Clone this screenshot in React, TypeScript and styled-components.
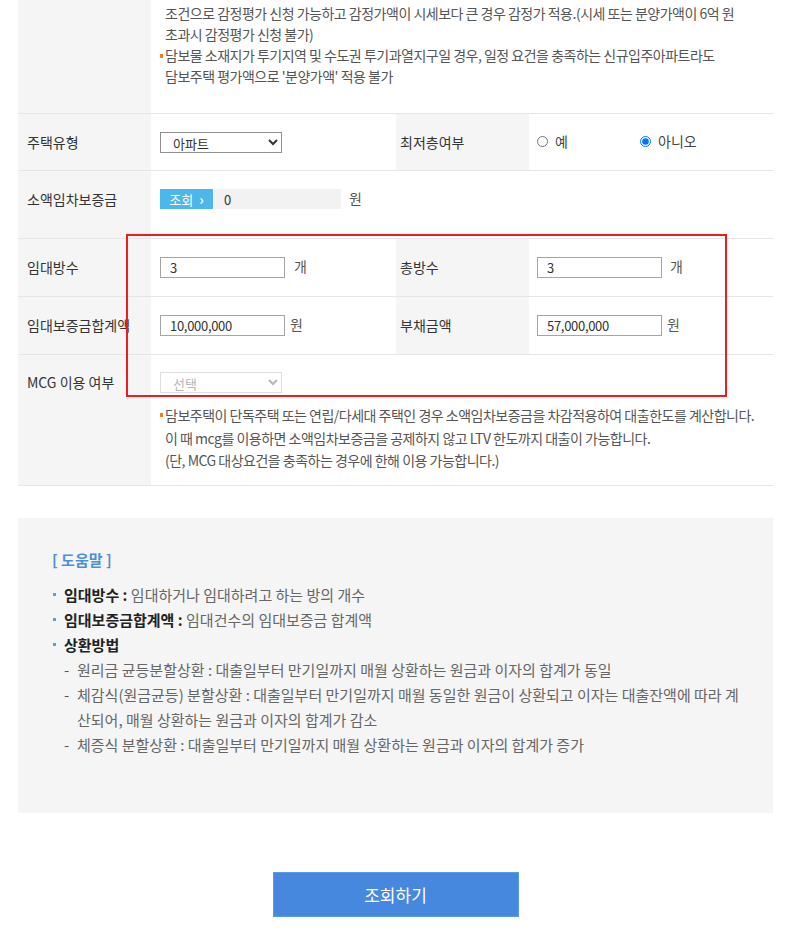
import React from "react";
import styled, {createGlobalStyle} from "styled-components";

const GlobalStyle = createGlobalStyle`
    body {
        margin: 0;
        background: #fff;
        font-family: "Noto Sans CJK KR", "Noto Sans", sans-serif;
        color: #333;
        font-size: 14px;
    }
`;

export default function App() {
    return (
        <Page>
            <GlobalStyle/>
            <FormWrap>
                <Table>
                    <colgroup>
                        <Col $w={133}/>
                        <Col $w={245}/>
                        <Col $w={133}/>
                        <Col $w={244}/>
                    </colgroup>
                    <tbody>
                    <Row>
                        <Th $pb={26}/>
                        <Td colSpan={3} $pt={3} $pb={26}>
                            <Note>
                                <NoteLine $plain>조건으로 감정평가 신청 가능하고 감정가액이 시세보다 큰 경우 감정가 적용.(시세 또는 분양가액이 6억 원<br/>초과시 감정평가 신청 불가)</NoteLine>
                                <NoteLine>담보물 소재지가 투기지역 및 수도권 투기과열지구일 경우, 일정 요건을 충족하는 신규입주아파트라도<br/>담보주택 평가액으로 '분양가액' 적용 불가</NoteLine>
                            </Note>
                        </Td>
                    </Row>
                    <Row>
                        <Th $pb={17}>주택유형</Th>
                        <Td $pb={17}>
                            <Select defaultValue="apt">
                                <option value="apt">아파트</option>
                                <option value="house">단독주택</option>
                            </Select>
                        </Td>
                        <Th $pb={17} $pl={4}>최저층여부</Th>
                        <Td $pb={17} $pl={8}>
                            <RadioGroup>
                                <RadioLabel><input type="radio" name="floor"/>예</RadioLabel>
                                <RadioLabel><input type="radio" name="floor" defaultChecked/>아니오</RadioLabel>
                            </RadioGroup>
                        </Td>
                    </Row>
                    <Row>
                        <Th>소액임차보증금</Th>
                        <Td colSpan={3} $pb={28}>
                            <Field>
                                <LookupButton>조회 <Chevron>›</Chevron></LookupButton>
                                <ReadOnly value="0" readOnly/>
                                <Unit $gap={8}>원</Unit>
                            </Field>
                        </Td>
                    </Row>
                    <Row>
                        <Th>임대방수</Th>
                        <Td>
                            <Field>
                                <Input defaultValue="3"/>
                                <Unit $gap={9}>개</Unit>
                            </Field>
                        </Td>
                        <Th $pl={4}>총방수</Th>
                        <Td $pl={8}>
                            <Field>
                                <Input defaultValue="3"/>
                                <Unit $gap={8}>개</Unit>
                            </Field>
                        </Td>
                    </Row>
                    <Row>
                        <Th>임대보증금합계액</Th>
                        <Td>
                            <Field>
                                <Input defaultValue="10,000,000"/>
                                <Unit $gap={5}>원</Unit>
                            </Field>
                        </Td>
                        <Th $pl={4}>부채금액</Th>
                        <Td $pl={8}>
                            <Field>
                                <Input defaultValue="57,000,000"/>
                                <Unit $gap={5}>원</Unit>
                            </Field>
                        </Td>
                    </Row>
                    <Row>
                        <Th $pt={17}>MCG 이용 여부</Th>
                        <Td colSpan={3} $pt={17} $pb={13}>
                            <Select disabled defaultValue="">
                                <option value="">선택</option>
                            </Select>
                            <Note $mt={11} $lh={22.5}>
                                <NoteLine>담보주택이 단독주택 또는 연립/다세대 주택인 경우 소액임차보증금을 차감적용하여 대출한도를 계산합니다.<br/>이 때 mcg를 이용하면 소액임차보증금을 공제하지 않고 LTV 한도까지 대출이 가능합니다.<br/>(단, MCG 대상요건을 충족하는 경우에 한해 이용 가능합니다.)</NoteLine>
                            </Note>
                        </Td>
                    </Row>
                    </tbody>
                </Table>
                <Highlight/>
            </FormWrap>

            <HelpBox>
                <HelpTitle>[ 도움말 ]</HelpTitle>
                <HelpList>
                    <HelpItem><b>임대방수 :</b> 임대하거나 임대하려고 하는 방의 개수</HelpItem>
                    <HelpItem><b>임대보증금합계액 :</b> 임대건수의 임대보증금 합계액</HelpItem>
                    <HelpItem>
                        <b>상환방법</b>
                        <SubList>
                            <SubItem>원리금 균등분할상환 : 대출일부터 만기일까지 매월 상환하는 원금과 이자의 합계가 동일</SubItem>
                            <SubItem>체감식(원금균등) 분할상환 : 대출일부터 만기일까지 매월 동일한 원금이 상환되고 이자는 대출잔액에 따라 계<br/>산되어, 매월 상환하는 원금과 이자의 합계가 감소</SubItem>
                            <SubItem>체증식 분할상환 : 대출일부터 만기일까지 매월 상환하는 원금과 이자의 합계가 증가</SubItem>
                        </SubList>
                    </HelpItem>
                </HelpList>
            </HelpBox>

            <Actions>
                <SubmitButton type="button">조회하기</SubmitButton>
            </Actions>
        </Page>
    );
}

const Page = styled.div`
    padding: 0 27px 0 18px;
    height: 941px;
    overflow: hidden;`
;
const FormWrap = styled.div`
    position: relative;`
;
const Table = styled.table`
    width: 755px;
    border-collapse: collapse;
    table-layout: fixed;
    font-family: "Noto Sans CJK KR", "Noto Sans", sans-serif;
    font-size: 14px;
    color: #333;`
;
const Col = styled.col<{ $w: number }>`
    width: ${p => p.$w}px;`
;
const Row = styled.tr`
    border-bottom: 1px solid #e6e6e6;`
;
const Th = styled.th<{ $pt?: number, $pb?: number, $pl?: number }>`
    background: #f5f5f5;
    text-align: left;
    vertical-align: top;
    font-weight: 400;
    color: #333;
    padding: ${p => p.$pt ?? 18}px 0 ${p => p.$pb ?? 18}px ${p => p.$pl ?? 9}px;
    line-height: 21px;
    white-space: nowrap;
    overflow: visible;`
;
const Td = styled.td<{ $pt?: number, $pb?: number, $pl?: number }>`
    vertical-align: top;
    padding: ${p => p.$pt ?? 18}px 0 ${p => p.$pb ?? 18}px ${p => p.$pl ?? 9}px;
    line-height: 21px;`
;
const Note = styled.ul<{ $mt?: number, $lh?: number }>`
    margin: ${p => p.$mt ?? 0}px 0 0;
    padding: 0;
    list-style: none;
    color: #555;
    letter-spacing: -0.5px;
    line-height: ${p => p.$lh ?? 21}px;`
;
const NoteLine = styled.li<{ $plain?: boolean }>`
    position: relative;
    padding-left: 5px;
    
    &::before {
        content: "";
        display: ${p => p.$plain ? "none" : "block"};
        position: absolute;
        left: 0;
        top: 9px;
        width: 3px;
        height: 4px;
        background: #f07d1e;
    }`
;
const Select = styled.select`
    width: 122px;
    height: 21px;
    font-family: inherit;
    font-size: 13px;
    color: #333;
    padding: 0 4px 0 8px;
    border: 1px solid #8f8f8f;
    border-radius: 0;
    background: #fff;
    vertical-align: top;
    
    &:disabled {
        color: #999;
        border-color: #d0d0d0;
        background: #fff;
    }`
;
const RadioGroup = styled.div`
    display: flex;
    height: 21px;
    align-items: center;
    color: #444;`
;
const RadioLabel = styled.label`
    display: inline-flex;
    align-items: center;
    width: 103px;
    margin-top: -3px;
    
    input {
        margin: 0 7px 0 0;
        width: 11px;
        height: 11px;
    }`
;
const Field = styled.div`
    display: flex;
    align-items: flex-start;
    height: 21px;`
;
const LookupButton = styled.span`
    display: inline-flex;
    align-items: center;
    justify-content: center;
    width: 53px;
    height: 20px;
    background: #4cb7ea;
    color: #fff;
    font-size: 13px;`
;
const Chevron = styled.span`
    margin-left: 6px;
    font-weight: 700;
    font-size: 14px;
    line-height: 1;`
;
const ReadOnly = styled.input`
    width: 127px;
    height: 20px;
    box-sizing: border-box;
    margin-left: 1px;
    border: 0;
    background: #f2f2f2;
    padding: 0 10px;
    font-family: inherit;
    font-size: 13px;
    color: #333;`
;
const Input = styled.input`
    width: 125px;
    height: 21px;
    box-sizing: border-box;
    border: 1px solid #a5a5a5;
    padding: 0 9px;
    font-family: inherit;
    font-size: 13px;
    letter-spacing: -0.3px;
    color: #333;
    background: #fff;`
;
const Unit = styled.span<{ $gap: number }>`
    margin-left: ${p => p.$gap}px;
    color: #555;
    line-height: 18px;`
;
const Highlight = styled.div`
    position: absolute;
    left: 108px;
    top: 234px;
    width: 601px;
    height: 163px;
    box-sizing: border-box;
    border: 2px solid #ee1c1c;
    pointer-events: none;`
;
const HelpBox = styled.div`
    width: 755px;
    box-sizing: border-box;
    margin-top: 32px;
    background: #f5f5f5;
    padding: 31px 16px 53px 34px;
    height: 295px;`
;
const HelpTitle = styled.h3`
    margin: 0;
    font-size: 15px;
    font-weight: 700;
    color: #4a8fdb;
    line-height: 22px;`
;
const HelpList = styled.ul`
    margin: 11px 0 0;
    padding: 0;
    list-style: none;
    line-height: 25px;
    color: #666;
    font-size: 15px;`
;
const HelpItem = styled.li`
    position: relative;
    padding-left: 12px;
    
    &::before {
        content: "";
        position: absolute;
        left: 1px;
        top: 11px;
        width: 3px;
        height: 3px;
        background: #4aa9dd;
    }
    
    b {
        color: #222;
        font-weight: 700;
    }`
;
const SubList = styled.ul`
    margin: 0;
    padding: 0;
    list-style: none;`
;
const SubItem = styled.li`
    position: relative;
    padding-left: 13px;
    
    &::before {
        content: "-";
        position: absolute;
        left: 0;
        top: 0;
        color: #555;
    }`
;
const Actions = styled.div`
    display: flex;
    justify-content: center;
    width: 755px;
    padding-top: 59px;`
;
const SubmitButton = styled.button`
    width: 246px;
    height: 45px;
    border: 1px solid #5b9be6;
    background: #4688de;
    color: #fff;
    font-family: inherit;
    font-size: 17px;
    cursor: pointer;`
;
